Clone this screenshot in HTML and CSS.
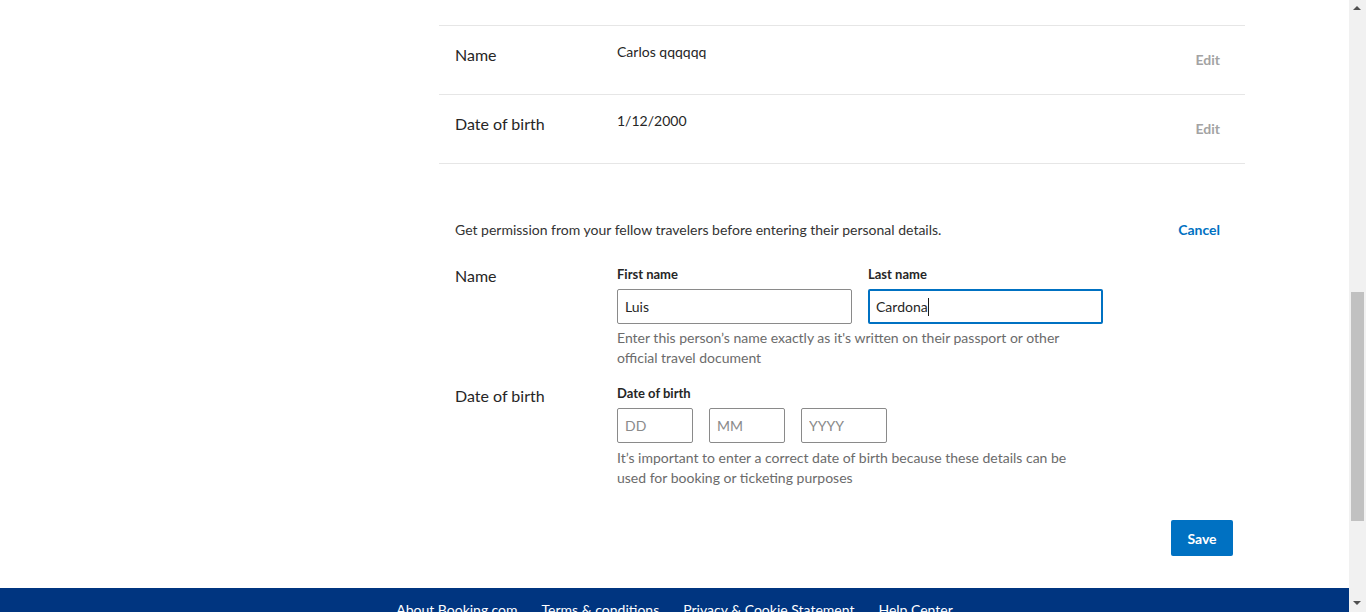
FILE: index.html
```html
<!DOCTYPE html>
<html lang="en">
<head>
<meta charset="utf-8">
<title>Personal details</title>
<link rel="stylesheet" href="styles.css">
</head>
<body>
<div class="page">
  <div class="main">
    <div class="content">
      <div class="row">
        <div class="row-label">Name</div>
        <div class="row-value">Carlos qqqqqq</div>
        <a class="row-edit">Edit</a>
      </div>
      <div class="row">
        <div class="row-label">Date of birth</div>
        <div class="row-value">1/12/2000</div>
        <a class="row-edit">Edit</a>
      </div>
      <div class="row-end"></div>

      <form class="form">
        <div class="intro">
          <p class="intro-text">Get permission from your fellow travelers before entering their personal details.</p>
          <a class="cancel">Cancel</a>
        </div>

        <div class="section">
          <div class="section-label">Name</div>
          <div class="section-fields">
            <div class="field-row">
              <label class="field">
                <span class="field-label">First name</span>
                <input class="input input-name" type="text" value="Luis">
              </label>
              <label class="field">
                <span class="field-label">Last name</span>
                <span class="input input-name input-focus">Cardona<span class="caret"></span></span>
              </label>
            </div>
            <p class="hint">Enter this person’s name exactly as it's written on their passport or other official travel document</p>
          </div>
        </div>

        <div class="section section-dob">
          <div class="section-label">Date of birth</div>
          <div class="section-fields">
            <span class="field-label">Date of birth</span>
            <div class="field-row dob-row">
              <input class="input input-dd" type="text" placeholder="DD">
              <input class="input input-dd" type="text" placeholder="MM">
              <input class="input input-yyyy" type="text" placeholder="YYYY">
            </div>
            <p class="hint">It’s important to enter a correct date of birth because these details can be used for booking or ticketing purposes</p>
          </div>
        </div>

        <div class="actions">
          <button class="save" type="button">Save</button>
        </div>
      </form>
    </div>
    <footer class="footer">
      <a>About Booking.com</a>
      <a>Terms &amp; conditions</a>
      <a>Privacy &amp; Cookie Statement</a>
      <a>Help Center</a>
    </footer>
  </div>
  <div class="scrollbar">
    <div class="arrow arrow-up"></div>
    <div class="track"><div class="thumb"></div></div>
    <div class="arrow arrow-down"></div>
  </div>
</div>
</body>
</html>
```
FILE: styles.css
```css
html, body {
  margin: 0;
  padding: 0;
  height: 612px;
  overflow: hidden;
}
body {
  font-family: Lato, "Open Sans", sans-serif;
  color: #262626;
  background: #fff;
}
.page {
  display: flex;
  height: 612px;
}
.main {
  flex: 1;
  display: flex;
  flex-direction: column;
  min-width: 0;
}
.content {
  width: 806px;
  margin-left: 439px;
  padding-top: 25px;
}
.row {
  display: flex;
  border-top: 1px solid #e6e6e6;
  height: 68px;
  box-sizing: content-box;
}
.row-end {
  border-top: 1px solid #e6e6e6;
}
.row-label {
  width: 178px;
  padding-left: 16px;
  box-sizing: border-box;
  font-size: 16px;
  line-height: 20px;
  padding-top: 19px;
}
.row-value {
  flex: 1;
  font-size: 14px;
  line-height: 20px;
  padding-top: 16px;
}
.row-edit {
  font-size: 14px;
  font-weight: 700;
  color: #a3a3a3;
  line-height: 20px;
  padding-top: 24px;
  padding-right: 25px;
}
.form {
  padding-top: 56px;
}
.intro {
  display: flex;
  justify-content: space-between;
  align-items: center;
  padding: 0 25px 0 16px;
}
.intro-text {
  margin: 0;
  font-size: 14px;
  line-height: 20px;
  color: #333;
}
.cancel {
  font-size: 14px;
  font-weight: 700;
  color: #0071c2;
  line-height: 20px;
}
.section {
  display: flex;
  margin-top: 24px;
}
.section-dob {
  margin-top: 16px;
}
.section-label {
  width: 178px;
  padding-left: 16px;
  box-sizing: border-box;
  font-size: 16px;
  line-height: 20px;
  padding-top: 2px;
}
.section-fields {
  display: flex;
  flex-direction: column;
  padding-top: 1px;
}
.section-dob .section-fields {
  padding-top: 0;
}
.field-row {
  display: flex;
  gap: 16px;
}
.field {
  display: flex;
  flex-direction: column;
}
.field-label {
  font-size: 13px;
  font-weight: 700;
  line-height: 18px;
  margin-bottom: 6px;
  color: #262626;
}
.input {
  box-sizing: border-box;
  height: 35px;
  border: 1px solid #8a8a8a;
  border-radius: 2px;
  font-family: inherit;
  font-size: 14px;
  color: #262626;
  padding: 0 7px;
  margin: 0;
  background: #fff;
  outline: none;
}
.input::placeholder {
  color: #8a8a8a;
}
.input-name {
  width: 235px;
}
.input-focus {
  display: flex;
  align-items: center;
  border: 2px solid #0071c2;
  padding: 0 6px;
}
.caret {
  display: inline-block;
  width: 1px;
  height: 18px;
  background: #1a1a1a;
}
.dob-row {
  gap: 16px;
}
.input-dd {
  width: 76px;
}
.input-yyyy {
  width: 86px;
}
.hint {
  margin: 4px 0 0;
  width: 470px;
  font-size: 14px;
  line-height: 20px;
  color: #6b6b6b;
}
.section-dob .hint {
  margin-top: 5px;
}
.actions {
  display: flex;
  justify-content: flex-end;
  padding-right: 12px;
  margin-top: 32px;
}
.save {
  width: 62px;
  height: 36px;
  border: 0;
  border-radius: 2px;
  background: #0071c2;
  color: #fff;
  font-family: inherit;
  font-size: 14px;
  font-weight: 700;
  padding: 0;
}
.footer {
  margin-top: 32px;
  background: #003580;
  flex: 1;
  display: flex;
  justify-content: center;
  gap: 24px;
  padding-top: 12px;
  font-size: 14px;
  line-height: 20px;
  color: #fff;
}
.scrollbar {
  width: 17px;
  background: #f1f1f1;
  display: flex;
  flex-direction: column;
  align-items: center;
}
.arrow {
  height: 17px;
  width: 17px;
  position: relative;
}
.arrow-up::after, .arrow-down::after {
  content: "";
  position: absolute;
  left: 4px;
  width: 0;
  height: 0;
  border-left: 4px solid transparent;
  border-right: 4px solid transparent;
}
.arrow-up::after {
  top: 6px;
  border-bottom: 4px solid #505050;
}
.arrow-down::after {
  top: 6px;
  border-top: 4px solid #505050;
}
.track {
  flex: 1;
  width: 100%;
  display: flex;
  flex-direction: column;
  align-items: center;
  padding-top: 275px;
}
.thumb {
  width: 13px;
  height: 229px;
  background: #c1c1c1;
}
```
